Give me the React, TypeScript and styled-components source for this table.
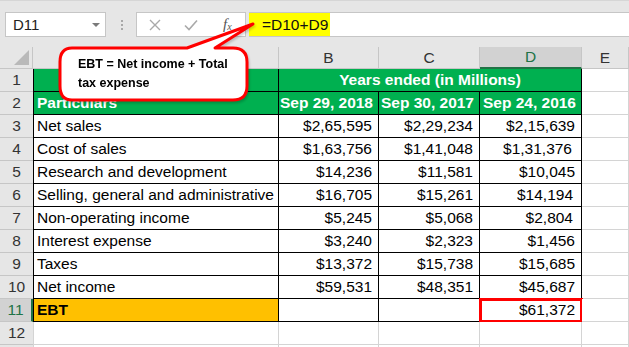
import React from 'react'
import styled, { createGlobalStyle } from 'styled-components'

const GlobalStyle = createGlobalStyle`
  html, body {
    margin: 0;
    padding: 0;
    background: #ffffff;
    overflow: hidden;
  }
  body {
    font-family: "Liberation Sans", Arial, sans-serif;
  }
`

const GRID_LINE = '#d4d4d4'
const HEAD_LINE = '#c6c6c6'

const Sheet = styled.div`
  position: relative;
  width: 629px;
  height: 347px;
  overflow: hidden;
  background: #ffffff;
`

const Toolbar = styled.div`
  display: flex;
  align-items: center;
  height: 47px;
  box-sizing: border-box;
  padding: 1px 0 0 5px;
  background: #e6e6e6;
  border-top: 1px solid #d6d6d6;
`

const NameBox = styled.div`
  display: flex;
  align-items: center;
  justify-content: space-between;
  width: 101px;
  height: 25px;
  box-sizing: border-box;
  padding: 0 5px 0 7px;
  background: #ffffff;
  border: 1px solid ${HEAD_LINE};
  font-size: 15px;
  color: #222;
`

const Caret = styled.span`
  width: 0;
  height: 0;
  border-left: 4px solid transparent;
  border-right: 4px solid transparent;
  border-top: 4px solid #7a7a7a;
`

const Grip = styled.div`
  display: flex;
  flex-direction: column;
  gap: 2px;
  margin: 0 13px 0 15px;
  span {
    width: 2px;
    height: 2px;
    background: #a8a8a8;
  }
`

const FxButtons = styled.div`
  display: flex;
  align-items: center;
  width: 110px;
  height: 25px;
  box-sizing: border-box;
  padding: 0 10px 0 12px;
  gap: 23px;
  background: #ffffff;
  border: 1px solid ${HEAD_LINE};
`

const FxLabel = styled.span`
  font-family: "Liberation Serif", "Times New Roman", serif;
  font-style: italic;
  font-size: 15px;
  color: #555;
  margin-left: 2px;
  sub {
    font-size: 10px;
    vertical-align: -1px;
  }
`

const FormulaBar = styled.div`
  flex: 1;
  display: flex;
  align-items: stretch;
  height: 25px;
  margin-left: 3px;
  box-sizing: border-box;
  background: #ffffff;
  border-top: 1px solid ${HEAD_LINE};
  border-bottom: 1px solid ${HEAD_LINE};
`

const Highlight = styled.span`
  display: flex;
  align-items: center;
  padding: 0 2px 0 13px;
  background: #ffff00;
  font-size: 15.5px;
  color: #111;
`

const GridRow = styled.div<{ $h: number }>`
  display: grid;
  grid-template-columns: 33px 246px 100px 101px 102px 1fr;
  height: ${p => p.$h}px;
`

const ColHead = styled.div<{ $active?: boolean }>`
  display: flex;
  align-items: center;
  justify-content: center;
  box-sizing: border-box;
  background: ${p => (p.$active ? '#d2d2d2' : '#e6e6e6')};
  border-right: 1px solid ${HEAD_LINE};
  border-bottom: ${p => (p.$active ? '2px solid #217346' : `1px solid ${HEAD_LINE}`)};
  font-size: 15.5px;
  color: ${p => (p.$active ? '#217346' : '#333')};
`

const Corner = styled.div`
  position: relative;
  box-sizing: border-box;
  background: #e6e6e6;
  border-right: 1px solid ${HEAD_LINE};
  border-bottom: 1px solid ${HEAD_LINE};
  &::after {
    content: '';
    position: absolute;
    right: 3px;
    bottom: 3px;
    border-left: 15px solid transparent;
    border-bottom: 15px solid #b9b9b9;
  }
`

const RowHead = styled.div<{ $active?: boolean }>`
  display: flex;
  align-items: center;
  justify-content: center;
  box-sizing: border-box;
  background: ${p => (p.$active ? '#d2d2d2' : '#e6e6e6')};
  border-bottom: 1px solid ${HEAD_LINE};
  border-right: ${p => (p.$active ? '2px solid #217346' : '0')};
  font-size: 15.5px;
  color: ${p => (p.$active ? '#217346' : '#333')};
`

type Tone = 'green' | 'orange' | 'plain'

const Cell = styled.div<{
  $tone?: Tone
  $ruled?: boolean
  $first?: boolean
  $align?: 'left' | 'right' | 'center'
  $bold?: boolean
  $pad?: number
  $span?: number
  $picked?: boolean
}>`
  display: flex;
  align-items: center;
  justify-content: ${p =>
    p.$align === 'right' ? 'flex-end' : p.$align === 'center' ? 'center' : 'flex-start'};
  box-sizing: border-box;
  padding: 0 ${p => p.$pad ?? 6}px 0 3px;
  grid-column: span ${p => p.$span ?? 1};
  background: ${p =>
    p.$tone === 'green' ? '#00b050' : p.$tone === 'orange' ? '#ffc000' : '#ffffff'};
  color: ${p => (p.$tone === 'green' ? '#ffffff' : '#000000')};
  font-size: 15.5px;
  font-weight: ${p => (p.$bold ? 700 : 400)};
  white-space: nowrap;
  border-right: 1px solid ${p => (p.$ruled ? '#000' : GRID_LINE)};
  border-bottom: 1px solid ${p => (p.$ruled ? '#000' : GRID_LINE)};
  border-left: ${p => (p.$first ? `1px solid ${p.$ruled ? '#000' : GRID_LINE}` : '0')};
  outline: ${p => (p.$picked ? '3px solid #ff0000' : 'none')};
  outline-offset: -2px;
`

const Callout = styled.div`
  position: absolute;
  left: 57px;
  top: 20px;
  width: 200px;
  height: 84px;
  filter: drop-shadow(1px 2px 1px rgba(0, 0, 0, 0.18));
`

const CalloutText = styled.div`
  position: absolute;
  left: 21px;
  top: 35px;
  font-size: 12.5px;
  font-weight: 700;
  line-height: 19px;
  color: #000;
`

type Line = { label: string; v: [string, string, string]; pad?: [number, number, number] }

const lines: Line[] = [
  { label: 'Net sales', v: ['$2,65,595', '$2,29,234', '$2,15,639'] },
  { label: 'Cost of sales', v: ['$1,63,756', '$1,41,048', '$1,31,376'], pad: [6, 6, 9] },
  { label: 'Research and development', v: ['$14,236', '$11,581', '$10,045'] },
  { label: 'Selling, general and administrative', v: ['$16,705', '$15,261', '$14,194'], pad: [6, 6, 8] },
  { label: 'Non-operating income', v: ['$5,245', '$5,068', '$2,804'], pad: [6, 6, 8] },
  { label: 'Interest expense', v: ['$3,240', '$2,323', '$1,456'] },
  { label: 'Taxes', v: ['$13,372', '$15,738', '$15,685'] },
  { label: 'Net income', v: ['$59,531', '$48,351', '$45,687'] },
]

const cols = ['A', 'B', 'C', 'D', 'E']

export default function App() {
  return (
    <Sheet>
      <GlobalStyle />
      <Toolbar>
        <NameBox>
          D11
          <Caret />
        </NameBox>
        <Grip>
          <span />
          <span />
          <span />
        </Grip>
        <FxButtons>
          <svg width="12" height="12" viewBox="0 0 12 12">
            <path d="M1 1 L11 11 M11 1 L1 11" stroke="#a9a9a9" strokeWidth="1.4" fill="none" />
          </svg>
          <svg width="14" height="12" viewBox="0 0 14 12">
            <path d="M1 6.5 L5 10.5 L13 1.5" stroke="#a9a9a9" strokeWidth="1.6" fill="none" />
          </svg>
          <FxLabel>
            f<sub>x</sub>
          </FxLabel>
        </FxButtons>
        <FormulaBar>
          <Highlight>=D10+D9</Highlight>
        </FormulaBar>
      </Toolbar>

      <GridRow $h={22}>
        <Corner />
        {cols.map(c => (
          <ColHead key={c} $active={c === 'D'}>
            {c}
          </ColHead>
        ))}
      </GridRow>

      <GridRow $h={23}>
        <RowHead>1</RowHead>
        <Cell $tone="green" $ruled $first />
        <Cell $tone="green" $ruled $bold $align="center" $pad={3} $span={3}>
          Years ended (in Millions)
        </Cell>
        <Cell />
      </GridRow>

      <GridRow $h={23}>
        <RowHead>2</RowHead>
        <Cell $tone="green" $ruled $first $bold>
          Particulars
        </Cell>
        {['Sep 29, 2018', 'Sep 30, 2017', 'Sep 24, 2016'].map(d => (
          <Cell key={d} $tone="green" $ruled $bold $align="right" $pad={5}>
            {d}
          </Cell>
        ))}
        <Cell />
      </GridRow>

      {lines.map((l, i) => (
        <GridRow key={l.label} $h={23}>
          <RowHead>{i + 3}</RowHead>
          <Cell $ruled $first>
            {l.label}
          </Cell>
          {l.v.map((v, j) => (
            <Cell key={j} $ruled $align="right" $pad={l.pad ? l.pad[j] : 6}>
              {v}
            </Cell>
          ))}
          <Cell />
        </GridRow>
      ))}

      <GridRow $h={23}>
        <RowHead $active>11</RowHead>
        <Cell $tone="orange" $ruled $first $bold>
          EBT
        </Cell>
        <Cell $ruled />
        <Cell $ruled />
        <Cell $ruled $picked $align="right" $pad={6}>
          $61,372
        </Cell>
        <Cell />
      </GridRow>

      <GridRow $h={23}>
        <RowHead>12</RowHead>
        <Cell $first />
        <Cell />
        <Cell />
        <Cell />
        <Cell />
      </GridRow>

      <GridRow $h={23}>
        <RowHead />
        <Cell $first />
        <Cell />
        <Cell />
        <Cell />
        <Cell />
      </GridRow>

      <Callout>
        <svg width="200" height="84" viewBox="0 0 200 84">
          <path
            d="M15 28 L130 28 L196 4 L158 28 L176 28 Q190 28 190 42 L190 66 Q190 80 176 80 L15 80 Q3 80 3 66 L3 42 Q3 28 15 28 Z"
            fill="#ffffff"
            stroke="#ff0000"
            strokeWidth="3"
            strokeLinejoin="round"
          />
        </svg>
        <CalloutText>
          EBT = Net income + Total
          <br />
          tax expense
        </CalloutText>
      </Callout>
    </Sheet>
  )
}
